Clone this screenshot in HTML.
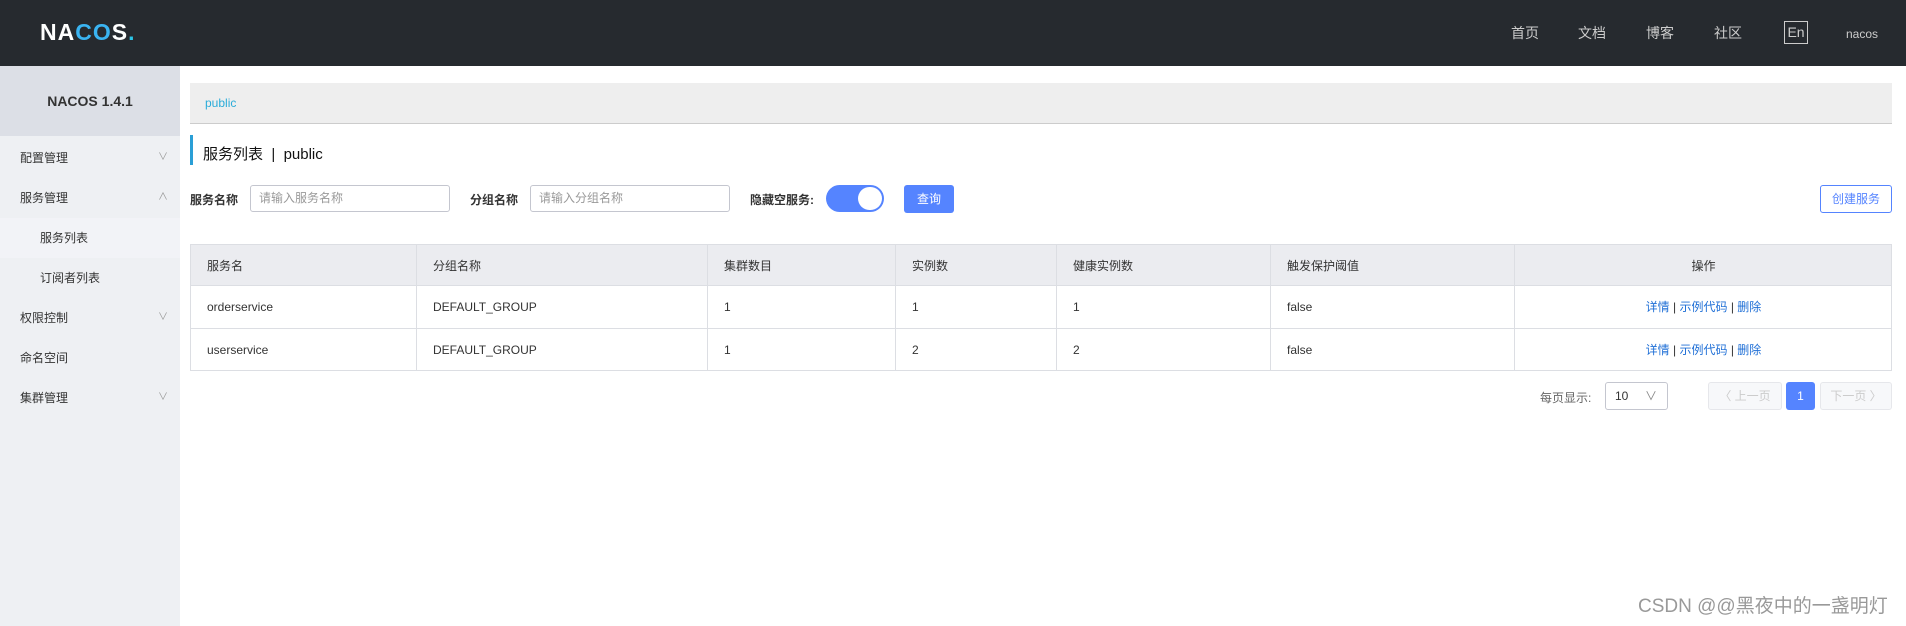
<!DOCTYPE html>
<html><head><meta charset="utf-8"><style>
*{box-sizing:border-box;margin:0;padding:0}
body{width:1906px;height:626px;overflow:hidden;background:#fff;font-family:"Liberation Sans","Noto Sans CJK SC",sans-serif;font-size:12px;color:#333;position:relative}
.a{position:absolute}
.hd{left:0;top:0;width:1906px;height:66px;background:#262a2f}
.nav{color:#ccc;font-size:14px;top:23px}
.sb{left:0;top:66px;width:180px;height:560px;background:#eef0f3}
.mi{left:0;width:180px;height:40px;line-height:40px;padding-left:20px;font-size:12px;color:#333}
.chev{position:absolute;right:12px;top:0;color:#999;font-size:10px}
.th,.td{position:absolute;height:100%;line-height:inherit;padding-left:16px;border-left:1px solid #dcdee3}
.row{position:absolute;left:190px;width:1702px;border-bottom:1px solid #dcdee3}
.lnk{color:#1f6fd6}
</style></head><body>
<div class="a hd"></div>
<div class="a" style="left:40px;top:19px;font-size:23px;font-weight:bold;color:#fff;letter-spacing:1px">NA<span style="color:#3ab4f2">CO</span>S<span style="color:#2bc4e6">.</span></div>
<div class="a nav" style="left:1511px">首页</div>
<div class="a nav" style="left:1578px">文档</div>
<div class="a nav" style="left:1646px">博客</div>
<div class="a nav" style="left:1714px">社区</div>
<div class="a" style="left:1784px;top:21px;width:24px;height:23px;border:1px solid #ccc;color:#ccc;font-size:14px;text-align:center;line-height:21px">En</div>
<div class="a" style="left:1846px;top:27px;color:#ccc;font-size:12px">nacos</div>

<div class="a sb"></div>
<div class="a" style="left:0;top:66px;width:180px;height:70px;background:#dcdfe6;text-align:center;line-height:70px;font-size:14px;font-weight:bold;color:#333">NACOS 1.4.1</div>
<div class="a mi" style="top:138px">配置管理<span class="chev">∨</span></div>
<div class="a mi" style="top:178px">服务管理<span class="chev">∧</span></div>
<div class="a mi" style="top:218px;background:#f2f3f7;padding-left:40px">服务列表</div>
<div class="a mi" style="top:258px;padding-left:40px">订阅者列表</div>
<div class="a mi" style="top:298px">权限控制<span class="chev">∨</span></div>
<div class="a mi" style="top:338px">命名空间</div>
<div class="a mi" style="top:378px">集群管理<span class="chev">∨</span></div>

<div class="a" style="left:190px;top:83px;width:1702px;height:41px;background:#eee;border-bottom:1px solid #ccc;padding-left:15px;line-height:41px;color:#2bacd9">public</div>
<div class="a" style="left:190px;top:135px;width:3px;height:30px;background:#2a9fd6"></div>
<div class="a" style="left:203px;top:143px;font-size:15px;color:#111">服务列表 &nbsp;|&nbsp; public</div>

<div class="a" style="left:190px;top:191px;font-weight:bold;color:#333">服务名称</div>
<div class="a" style="left:250px;top:185px;width:200px;height:27px;border:1px solid #c4c6cf;border-radius:3px;padding-left:8px;line-height:25px;color:#999">请输入服务名称</div>
<div class="a" style="left:470px;top:191px;font-weight:bold">分组名称</div>
<div class="a" style="left:530px;top:185px;width:200px;height:27px;border:1px solid #c4c6cf;border-radius:3px;padding-left:8px;line-height:25px;color:#999">请输入分组名称</div>
<div class="a" style="left:750px;top:191px;font-weight:bold">隐藏空服务:</div>
<div class="a" style="left:826px;top:185px;width:58px;height:27px;border-radius:14px;background:#5584ff"></div>
<div class="a" style="left:858px;top:187px;width:24px;height:23px;border-radius:12px;background:#fff"></div>
<div class="a" style="left:904px;top:185px;width:50px;height:28px;background:#5584ff;border-radius:3px;color:#fff;text-align:center;line-height:28px">查询</div>
<div class="a" style="left:1820px;top:185px;width:72px;height:28px;border:1px solid #5584ff;border-radius:3px;color:#5584ff;text-align:center;line-height:26px">创建服务</div>

<div class="row" style="top:244px;height:42px;line-height:42px;background:#ebecf0;border-top:1px solid #dcdee3;border-right:1px solid #dcdee3">
<div class="th" style="left:0">服务名</div><div class="th" style="left:226px">分组名称</div><div class="th" style="left:517px">集群数目</div><div class="th" style="left:705px">实例数</div><div class="th" style="left:866px">健康实例数</div><div class="th" style="left:1080px">触发保护阈值</div><div class="th" style="left:1324px;width:378px;text-align:center;padding-left:0">操作</div></div>
<div class="row" style="top:286px;height:43px;line-height:42px;border-right:1px solid #dcdee3">
<div class="td" style="left:0">orderservice</div><div class="td" style="left:226px">DEFAULT_GROUP</div><div class="td" style="left:517px">1</div><div class="td" style="left:705px">1</div><div class="td" style="left:866px">1</div><div class="td" style="left:1080px">false</div><div class="td" style="left:1324px;width:378px;text-align:center;padding-left:0"><span class="lnk">详情</span> | <span class="lnk">示例代码</span> | <span class="lnk">删除</span></div></div>
<div class="row" style="top:329px;height:42px;line-height:42px;border-right:1px solid #dcdee3">
<div class="td" style="left:0">userservice</div><div class="td" style="left:226px">DEFAULT_GROUP</div><div class="td" style="left:517px">1</div><div class="td" style="left:705px">2</div><div class="td" style="left:866px">2</div><div class="td" style="left:1080px">false</div><div class="td" style="left:1324px;width:378px;text-align:center;padding-left:0"><span class="lnk">详情</span> | <span class="lnk">示例代码</span> | <span class="lnk">删除</span></div></div>

<div class="a" style="left:1540px;top:389px;color:#666">每页显示:</div>
<div class="a" style="left:1605px;top:382px;width:63px;height:28px;border:1px solid #c4c6cf;border-radius:3px;line-height:26px;padding-left:9px">10<span style="position:absolute;right:10px;color:#888">∨</span></div>
<div class="a" style="left:1708px;top:382px;width:74px;height:28px;border:1px solid #e6e7eb;background:#f7f8fa;border-radius:3px;line-height:26px;text-align:center;color:#ccc">〈 上一页</div>
<div class="a" style="left:1786px;top:382px;width:29px;height:28px;background:#5584ff;border-radius:3px;line-height:28px;text-align:center;color:#fff">1</div>
<div class="a" style="left:1820px;top:382px;width:72px;height:28px;border:1px solid #e6e7eb;background:#f7f8fa;border-radius:3px;line-height:26px;text-align:center;color:#ccc">下一页 〉</div>
<div class="a" style="left:1638px;top:591px;font-size:19px;color:#999">CSDN @@黑夜中的一盏明灯</div>
</body></html>
